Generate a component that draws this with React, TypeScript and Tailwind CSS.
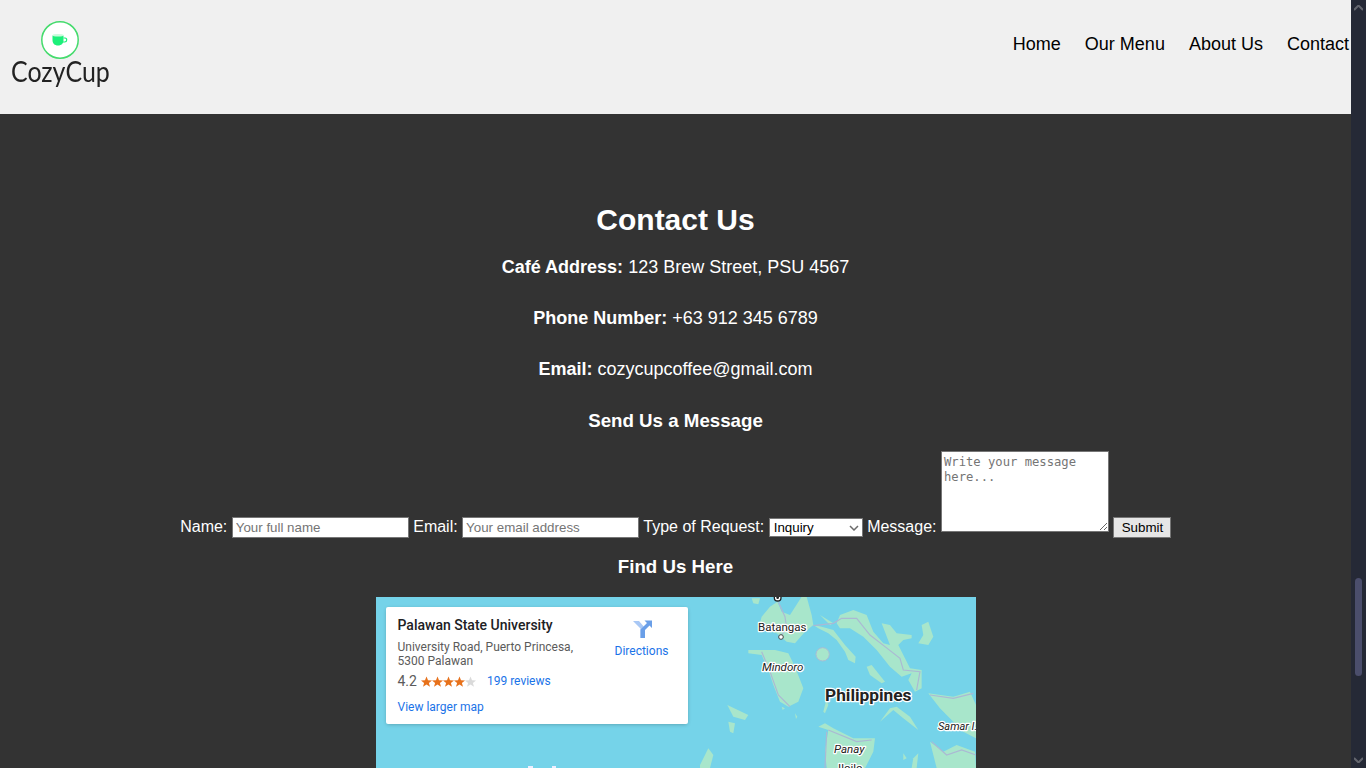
const land: string[] = [
  "215,65 240,35 262,20 275,50 300,60 335,5 350,5 365,60 370,90 345,110 315,145 290,140 260,115 205,100",
  "370,90 395,95 430,105 465,150 497,185 495,205 475,195 465,170 440,135 415,115 385,100",
  "440,85 450,60 490,45 530,60 550,110 580,145 600,150 575,85 600,90 620,115 665,120 665,130 640,135 625,150 645,190 660,220 695,225 695,280 675,290 655,255 665,235 635,245 600,215 560,165 520,125 480,100 450,100",
  "695,90 715,80 730,125 715,150 685,145 700,120",
  "175,165 215,165 255,165 295,175 315,215 340,280 325,320 295,335 270,320 250,270 235,225 215,180 175,175",
  "530,215 545,210 585,260 575,265 540,240",
  "715,295 790,305 840,290 858,330 858,430 820,410 790,380 750,340",
  "385,395 405,385 430,400 490,430 555,430 550,470 530,510 525,519 410,519 405,470 415,405",
  "720,440 760,470 800,450 855,470 858,519 740,519",
  "570,380 600,340 620,335 660,365 685,405 640,370 610,345 565,385",
  "400,350 410,310 415,330 405,355",
  "112,330 175,360 165,375 130,365",
  "115,380 135,385 130,415 120,410",
  "30,510 55,460 70,480 60,519 30,519",
  "390,60 430,85 420,90",
  "185,10 210,10 205,28 190,25",
  "640,475 650,490 640,495",
  "670,490 685,475 680,519 665,519",
  "315,355 322,365 318,372",
  "275,335 285,340 278,345",
];

function MapArt() {
  return (
    <svg viewBox="0 0 600 171" className="block w-[600px] h-[171px]">
      <rect width="600" height="171" fill="#75d3e9" />
      <g transform="translate(314,-2) scale(0.3333)">
        <g style={{ filter: "blur(1px)" }}>
          {land.map((p) => (
            <polygon key={p} points={p} fill="#a8e6cb" />
          ))}
          <circle cx="398" cy="178" r="20" fill="#a8e6cb" stroke="#a9bcd2" strokeWidth="3" />
          <g fill="none" stroke="#abb9d4" strokeWidth="3.5">
            <polyline points="265,20 285,65 290,100 275,120" />
            <polyline points="370,92 430,85 455,70 500,70 540,120 585,155 630,190 640,225 690,230 680,285" />
            <polyline points="215,170 240,230 265,300 300,335" />
            <polyline points="415,405 500,440 545,435" />
            <polyline points="410,410 405,519" />
            <polyline points="720,300 790,310 850,295" />
            <polyline points="725,440 770,480 815,465 858,480" />
          </g>
        </g>
        <circle cx="263" cy="8" r="10" fill="#fff" stroke="#222" strokeWidth="4" />
        <circle cx="263" cy="8" r="4" fill="#222" />
        <circle cx="273" cy="126" r="7" fill="#fff" stroke="#444" strokeWidth="3" />
      </g>
      <rect x="152" y="169" width="5" height="2" fill="#eef" />
      <rect x="176" y="169" width="4" height="2" fill="#eef" />
      <g fontFamily="Roboto, sans-serif" fill="#222" stroke="#fff" strokeWidth="2.5" style={{ paintOrder: "stroke" }} strokeLinejoin="round">
        <text x="382" y="34" fontSize="11.5">Batangas</text>
        <text x="386" y="74" fontSize="11.5" fontStyle="italic">Mindoro</text>
        <text x="449" y="104" fontSize="17.3" fontWeight="700">Philippines</text>
        <text x="562" y="133" fontSize="11" fontStyle="italic">Samar I.</text>
        <text x="458" y="156" fontSize="11.5" fontStyle="italic">Panay</text>
        <text x="462" y="175" fontSize="11.5">Iloilo</text>
      </g>
    </svg>
  );
}

function Stars() {
  return (
    <svg viewBox="0 0 55 11" className="w-[55px] h-[11px] ml-[4px]">
      {[0, 1, 2, 3, 4].map((i) => (
        <polygon
          key={i}
          transform={`translate(${i * 11},0)`}
          points="5.5,0.5 7,4.2 11,4.4 7.9,6.9 9,10.8 5.5,8.6 2,10.8 3.1,6.9 0,4.4 4,4.2"
          fill={i === 4 ? "#dadada" : "#e7711b"}
        />
      ))}
    </svg>
  );
}

export default function App() {
  return (
    <div className="flex h-screen overflow-hidden bg-[#333333] font-['Liberation_Sans',Arial,sans-serif]">
      <main className="flex-1 min-w-0 overflow-hidden">
        <header className="h-[114px] bg-[#f0f0f0] flex items-center justify-between pl-[10px] pr-[2px]">
          <div className="flex flex-col items-center w-[100px] -mt-[5px]">
            <svg viewBox="0 0 40 40" className="w-[40px] h-[40px]">
              <circle cx="20" cy="20" r="18.2" fill="#fff" stroke="#45db6d" strokeWidth="1.5" />
              <path d="M12.5 15.5h11v4.5c0 3.4-2 5.5-5.5 5.5s-5.5-2.1-5.5-5.5z" fill="#1cf07a" />
              <ellipse cx="18" cy="15.2" rx="5.5" ry="1.3" fill="#c9fbdc" />
              <path d="M23.5 18h1.6c2.2 0 2.2 4-.4 4h-2" fill="none" stroke="#1cf07a" strokeWidth="1.2" />
            </svg>
            <span className="font-['Lato',sans-serif] text-[29px] leading-[36px] text-[#222] -mt-[7px] scale-x-[0.86] whitespace-nowrap">CozyCup</span>
          </div>
          <nav className="flex gap-6 text-[18px] text-black -mt-[26px]">
            <a>Home</a>
            <a>Our Menu</a>
            <a>About Us</a>
            <a>Contact</a>
          </nav>
        </header>
        <section className="pt-[89px] text-center text-white text-[18px]">
          <h2 className="text-[30px] leading-[34px] font-bold mb-[20px]">Contact Us</h2>
          <p className="mb-[30px] leading-[21px]"><strong>Café Address:</strong> 123 Brew Street, PSU 4567</p>
          <p className="mb-[30px] leading-[21px]"><strong>Phone Number:</strong> +63 912 345 6789</p>
          <p className="mb-[30px] leading-[21px]"><strong>Email:</strong> cozycupcoffee@gmail.com</p>
          <h3 className="text-[18.72px] leading-[22px] font-bold mb-[19px]">Send Us a Message</h3>
          <form className="mb-[17px] pl-[0.6px] text-[16px]">
            <label>Name:</label>{" "}
            <input placeholder="Your full name" className="w-[177px] h-[21px] px-[3px] bg-white border border-[#767676] text-[13.33px] text-black placeholder:text-[#757575] outline-none" />{" "}
            <label>Email:</label>{" "}
            <input placeholder="Your email address" className="w-[177px] h-[21px] px-[3px] bg-white border border-[#767676] text-[13.33px] text-black placeholder:text-[#757575] outline-none" />{" "}
            <label>Type of Request:</label>{" "}
            <span className="relative inline-block">
              <select className="block appearance-none w-[94px] h-[19px] pl-[4px] bg-white border border-[#767676] rounded-none text-[13.33px] leading-[15px] text-black" defaultValue="Inquiry">
                <option>Inquiry</option>
              </select>
              <svg viewBox="0 0 10 6" className="absolute right-[4px] top-[7px] w-[10px] h-[6px]">
                <path d="M1 1l4 4 4-4" fill="none" stroke="#6b6b6b" strokeWidth="1.5" />
              </svg>
            </span>{" "}
            <label>Message:</label>{" "}
            <textarea placeholder="Write your message here..." className="w-[168px] h-[81px] px-[2px] pt-[3px] bg-white border border-[#767676] text-[12.2px] leading-[15px] font-['DejaVu_Sans_Mono',monospace] text-black placeholder:text-[#757575] outline-none align-baseline" />{" "}
            <button type="button" className="w-[58px] h-[21px] bg-[#e6e6e6] border border-[#767676] text-[13.33px] leading-none text-black">Submit</button>
          </form>
          <h3 className="text-[18.72px] leading-[22px] font-bold mb-[19px]">Find Us Here</h3>
          <div className="relative w-[600px] mx-auto text-left font-['Roboto',sans-serif] font-normal">
            <MapArt />
            <div className="absolute left-[10px] top-[10px] w-[302px] h-[117px] bg-white rounded-[2px] shadow-[0_1px_4px_-1px_rgba(0,0,0,0.3)] pl-[12px] pr-[12px] pt-[9px] flex flex-col">
              <div className="flex justify-between">
                <div className="w-[195px]">
                  <div className="text-[14px] leading-[18px] font-medium text-[#202124]">Palawan State University</div>
                  <div className="text-[12px] leading-[14px] text-[#5b5b5b] mt-[6px]">University Road, Puerto Princesa, 5300 Palawan</div>
                  <div className="flex items-center mt-[5px] h-[16px]">
                    <span className="text-[14px] text-[#5b5b5b]">4.2</span>
                    <Stars />
                    <span className="text-[12px] text-[#1a73e8] ml-[11px]">199 reviews</span>
                  </div>
                </div>
                <div className="flex flex-col items-center w-[66px] mr-[1px] mt-[3px]">
                  <svg viewBox="0 0 20 20" className="w-[20px] h-[20px]">
                    <path d="M1 2l7.5 7.5v9.5h4.5V9L7 2z" fill="#a9c8f5" />
                    <path d="M8.5 19V10.5L15 4l-2.5-2.5H20V9l-2.5-2.5L13 11v8z" fill="#6a9fe8" />
                  </svg>
                  <span className="text-[12px] leading-[14px] text-[#1a73e8] mt-[5px]">Directions</span>
                </div>
              </div>
              <div className="text-[12px] leading-[14px] text-[#1a73e8] mt-[11px]">View larger map</div>
            </div>
          </div>
        </section>
      </main>
      <aside className="w-[15px] shrink-0 h-screen bg-[#252936] flex flex-col items-center justify-between py-[5px] relative">
        <svg viewBox="0 0 9 6" className="w-[9px] h-[6px]"><path d="M0 5l4.5-4.5L9 5" fill="none" stroke="#64666e" strokeWidth="2" /></svg>
        <div className="absolute top-[578px] left-[4px] w-[7px] h-[98px] rounded-[4px] bg-[#4b4e6c]" />
        <svg viewBox="0 0 9 6" className="w-[9px] h-[6px]"><path d="M0 1l4.5 4.5L9 1" fill="none" stroke="#64666e" strokeWidth="2" /></svg>
      </aside>
    </div>
  );
}
